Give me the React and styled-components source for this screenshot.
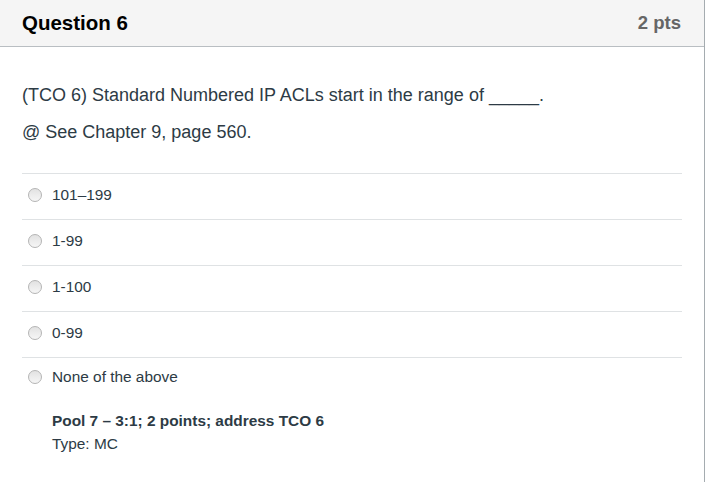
import React from 'react';
import styled, { createGlobalStyle } from 'styled-components';

const answers = ['101–199', '1-99', '1-100', '0-99', 'None of the above'];

export default function App() {
  return (
    <>
      <GlobalStyle />
      <Card>
        <Header>
          <Title>Question 6</Title>
          <Points>2 pts</Points>
        </Header>
        <Body>
          <Prompt>(TCO 6) Standard Numbered IP ACLs start in the range of _____.</Prompt>
          <Prompt>@ See Chapter 9, page 560.</Prompt>
          <Answers>
            {answers.map((a, i) => (
              <Answer key={a} $last={i === answers.length - 1}>
                <Radio />
                <AnswerText>{a}</AnswerText>
              </Answer>
            ))}
          </Answers>
          <Meta>
            <strong>Pool 7 – 3:1; 2 points; address TCO 6</strong>
            <span>Type: MC</span>
          </Meta>
        </Body>
      </Card>
    </>
  );
}

const GlobalStyle = createGlobalStyle`
  body {
    margin: 0;
    background: #fff;
    font-family: 'Liberation Sans', Arial, sans-serif;
  }
`;

const Card = styled.div`
  width: 705px;
  height: 482px;
  border-right: 1px solid #a5acb0;
  box-sizing: border-box;
  background: #fff;
`;

const Header = styled.div`
  height: 46px;
  display: flex;
  align-items: center;
  justify-content: space-between;
  padding: 0 23px 0 22px;
  background: #f5f5f5;
  border-bottom: 1px solid #b9bec2;
`;

const Title = styled.div`
  font-size: 20.5px;
  font-weight: bold;
  color: #000;
`;

const Points = styled.div`
  font-size: 18.5px;
  font-weight: bold;
  color: #666;
`;

const Body = styled.div`
  padding: 38px 22px 0;
`;

const Prompt = styled.p`
  margin: 0 0 17px;
  font-size: 18px;
  line-height: 20px;
  color: #2d3b45;
`;

const Answers = styled.div`
  margin-top: 31px;
`;

const Answer = styled.div`
  height: 46px;
  display: flex;
  align-items: center;
  border-top: 1px solid #dfe2e4;
  padding: 0 0 ${p => (p.$last ? '7px' : '3px')} 6px;
  box-sizing: border-box;
`;

const Radio = styled.span`
  width: 12px;
  height: 12px;
  border-radius: 50%;
  border: 1px solid #b4b4b4;
  background: linear-gradient(#e2e2e2, #f6f6f6);
  margin-right: 10px;
  flex-shrink: 0;
`;

const AnswerText = styled.span`
  font-size: 15.4px;
  color: #2d3b45;
`;

const Meta = styled.div`
  display: flex;
  flex-direction: column;
  padding: 6px 0 0 30px;
  font-size: 15.4px;
  line-height: 23px;
  color: #2d3b45;
`;
